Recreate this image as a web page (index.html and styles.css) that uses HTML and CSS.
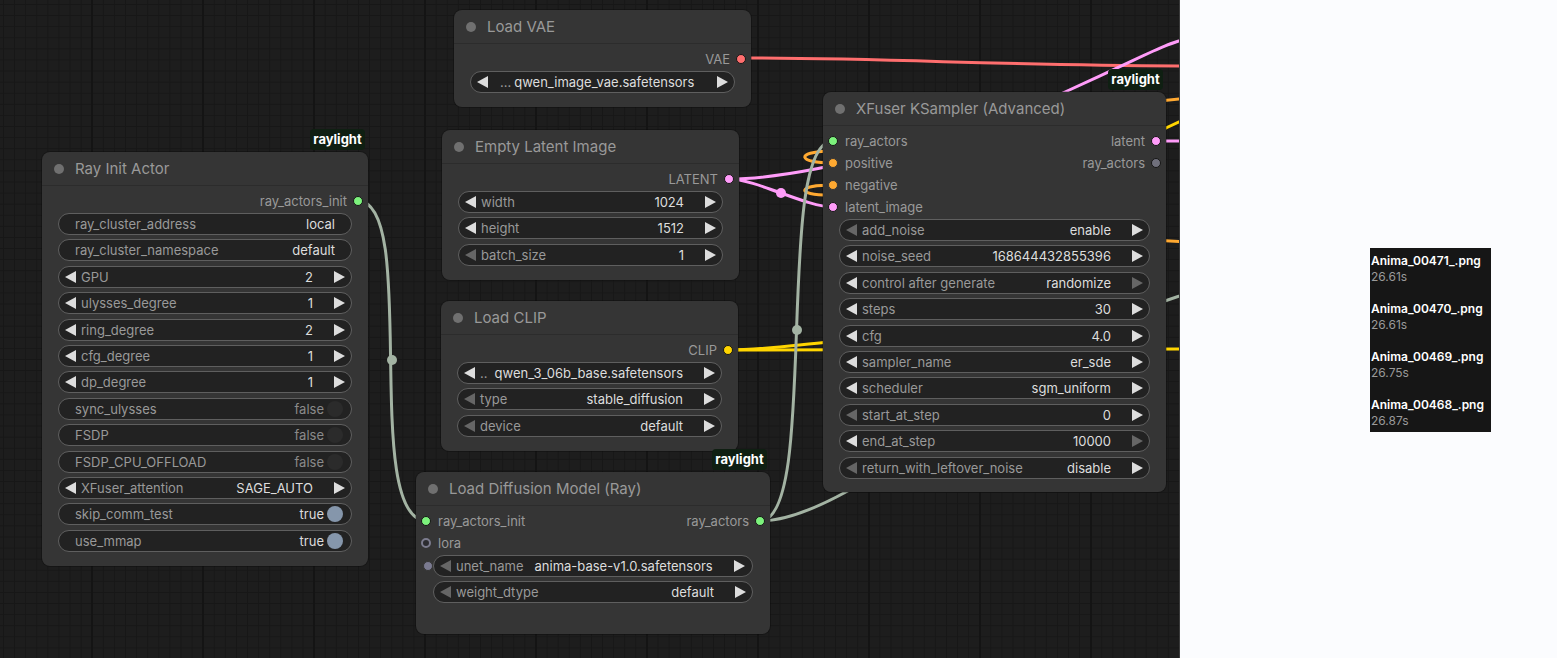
FILE: index.html
```html
<!DOCTYPE html>
<html lang="en">
<head>
    <meta charset="UTF-8">
    <meta name="viewport" content="width=device-width, initial-scale=1.0">
    <title>ComfyUI - Raylight</title>
    <link rel="stylesheet" href="styles.css">
</head>
<body>
<div class="app">

    <!-- Graph canvas -->
    <div class="canvas">

        <!-- Links -->
        <svg class="links" width="1179" height="658" viewBox="0 0 1179 658">
            <g fill="none" stroke-width="3" stroke-linecap="round">
                <path stroke="#ff6e6e" d="M741,58 C900,58 1000,66 1200,66"/>
                <path stroke="#ff9cf9" d="M729,179 C800,179 960,140 1065,92 S1150,50 1200,34"/>
                <path stroke="#ff9cf9" d="M729,179 C756,179 806,207 833,207"/>
                <path stroke="#ff9cf9" d="M1157,141 L1195,141"/>
                <path stroke="#ffa931" d="M833,163 C798,163 794,152 830,151 C950,150 1100,102 1195,98"/>
                <path stroke="#ffa931" d="M833,185 C798,185 794,195 830,195 C950,196 1100,242 1195,242"/>
                <path stroke="#ffd500" d="M727,350 C900,350 1000,349 1195,349"/>
                <path stroke="#ffd500" d="M727,350 C765,350 795,345 830,342 L1166,128 L1200,112"/>
                <path stroke="#a3b3a3" d="M358,201 C420,201 360,521 427,521"/>
                <path stroke="#a3b3a3" d="M760,521 C820,521 773,141 833,141"/>
                <path stroke="#a3b3a3" d="M760,521 C860,521 1040,330 1200,290"/>
            </g>
            <circle cx="392" cy="360" r="5" fill="#a3b3a3"/>
            <circle cx="797" cy="330" r="5" fill="#a3b3a3"/>
            <circle cx="781" cy="193" r="5" fill="#ff9cf9"/>
        </svg>

        <!-- Load VAE -->
        <div class="node node-vae">
            <div class="node-title"><span class="title-dot"></span>Load VAE</div>
            <div class="node-body">
                <div class="slot-row">
                    <span class="slot out">VAE<i class="dot red"></i></span>
                </div>
                <div class="widgets">
                    <div class="widget num">
                        <span class="arr left"></span>
                        <span class="w-label trunc-wide">…</span>
                        <span class="w-value file">qwen_image_vae.safetensors</span>
                        <span class="arr right"></span>
                    </div>
                </div>
            </div>
        </div>

        <!-- Empty Latent Image -->
        <div class="node node-latent">
            <div class="node-title"><span class="title-dot"></span>Empty Latent Image</div>
            <div class="node-body">
                <div class="slot-row">
                    <span class="slot out">LATENT<i class="dot pink"></i></span>
                </div>
                <div class="widgets">
                    <div class="widget num">
                        <span class="arr left"></span>
                        <span class="w-label">width</span>
                        <span class="w-value">1024</span>
                        <span class="arr right"></span>
                    </div>
                    <div class="widget num">
                        <span class="arr left"></span>
                        <span class="w-label">height</span>
                        <span class="w-value">1512</span>
                        <span class="arr right"></span>
                    </div>
                    <div class="widget num">
                        <span class="arr left off"></span>
                        <span class="w-label">batch_size</span>
                        <span class="w-value">1</span>
                        <span class="arr right"></span>
                    </div>
                </div>
            </div>
        </div>

        <!-- Load CLIP -->
        <div class="node node-clip">
            <div class="node-title"><span class="title-dot"></span>Load CLIP</div>
            <div class="node-body">
                <div class="slot-row">
                    <span class="slot out">CLIP<i class="dot yellow"></i></span>
                </div>
                <div class="widgets">
                    <div class="widget num">
                        <span class="arr left"></span>
                        <span class="w-label">..</span>
                        <span class="w-value file">qwen_3_06b_base.safetensors</span>
                        <span class="arr right"></span>
                    </div>
                    <div class="widget num">
                        <span class="arr left off"></span>
                        <span class="w-label">type</span>
                        <span class="w-value">stable_diffusion</span>
                        <span class="arr right"></span>
                    </div>
                    <div class="widget num">
                        <span class="arr left off"></span>
                        <span class="w-label">device</span>
                        <span class="w-value">default</span>
                        <span class="arr right"></span>
                    </div>
                </div>
            </div>
        </div>

        <!-- Ray Init Actor -->
        <div class="node node-ray-init">
            <div class="badge">raylight</div>
            <div class="node-title"><span class="title-dot"></span>Ray Init Actor</div>
            <div class="node-body">
                <div class="slot-row">
                    <span class="slot out">ray_actors_init<i class="dot green"></i></span>
                </div>
                <div class="widgets">
                    <div class="widget text">
                        <span class="w-label">ray_cluster_address</span>
                        <span class="w-value">local</span>
                    </div>
                    <div class="widget text">
                        <span class="w-label">ray_cluster_namespace</span>
                        <span class="w-value">default</span>
                    </div>
                    <div class="widget num">
                        <span class="arr left"></span>
                        <span class="w-label">GPU</span>
                        <span class="w-value">2</span>
                        <span class="arr right"></span>
                    </div>
                    <div class="widget num">
                        <span class="arr left"></span>
                        <span class="w-label">ulysses_degree</span>
                        <span class="w-value">1</span>
                        <span class="arr right"></span>
                    </div>
                    <div class="widget num">
                        <span class="arr left"></span>
                        <span class="w-label">ring_degree</span>
                        <span class="w-value">2</span>
                        <span class="arr right"></span>
                    </div>
                    <div class="widget num">
                        <span class="arr left"></span>
                        <span class="w-label">cfg_degree</span>
                        <span class="w-value">1</span>
                        <span class="arr right"></span>
                    </div>
                    <div class="widget num">
                        <span class="arr left"></span>
                        <span class="w-label">dp_degree</span>
                        <span class="w-value">1</span>
                        <span class="arr right"></span>
                    </div>
                    <div class="widget toggle">
                        <span class="w-label">sync_ulysses</span>
                        <span class="w-value muted">false</span>
                        <span class="knob"></span>
                    </div>
                    <div class="widget toggle">
                        <span class="w-label">FSDP</span>
                        <span class="w-value muted">false</span>
                        <span class="knob"></span>
                    </div>
                    <div class="widget toggle">
                        <span class="w-label">FSDP_CPU_OFFLOAD</span>
                        <span class="w-value muted">false</span>
                        <span class="knob"></span>
                    </div>
                    <div class="widget num">
                        <span class="arr left"></span>
                        <span class="w-label">XFuser_attention</span>
                        <span class="w-value">SAGE_AUTO</span>
                        <span class="arr right"></span>
                    </div>
                    <div class="widget toggle">
                        <span class="w-label">skip_comm_test</span>
                        <span class="w-value">true</span>
                        <span class="knob on"></span>
                    </div>
                    <div class="widget toggle">
                        <span class="w-label">use_mmap</span>
                        <span class="w-value">true</span>
                        <span class="knob on"></span>
                    </div>
                </div>
            </div>
        </div>

        <!-- Load Diffusion Model (Ray) -->
        <div class="node node-diffusion">
            <div class="badge">raylight</div>
            <div class="node-title"><span class="title-dot"></span>Load Diffusion Model (Ray)</div>
            <div class="node-body">
                <div class="slot-row">
                    <span class="slot in"><i class="dot green"></i>ray_actors_init</span>
                    <span class="slot out">ray_actors<i class="dot green"></i></span>
                </div>
                <div class="slot-row">
                    <span class="slot in"><i class="dot ring"></i>lora</span>
                </div>
                <div class="widgets">
                    <div class="widget num">
                        <i class="dot widget-in"></i>
                        <span class="arr left off"></span>
                        <span class="w-label fixed">unet_name</span>
                        <span class="w-value">anima-base-v1.0.safetensors</span>
                        <span class="arr right"></span>
                    </div>
                    <div class="widget num">
                        <span class="arr left off"></span>
                        <span class="w-label">weight_dtype</span>
                        <span class="w-value">default</span>
                        <span class="arr right"></span>
                    </div>
                </div>
            </div>
        </div>

        <!-- XFuser KSampler (Advanced) -->
        <div class="node node-ksampler">
            <div class="badge">raylight</div>
            <div class="node-title"><span class="title-dot"></span>XFuser KSampler (Advanced)</div>
            <div class="node-body">
                <div class="slot-row">
                    <span class="slot in"><i class="dot green"></i>ray_actors</span>
                    <span class="slot out">latent<i class="dot pink"></i></span>
                </div>
                <div class="slot-row">
                    <span class="slot in"><i class="dot orange"></i>positive</span>
                    <span class="slot out">ray_actors<i class="dot grey"></i></span>
                </div>
                <div class="slot-row">
                    <span class="slot in"><i class="dot orange"></i>negative</span>
                </div>
                <div class="slot-row">
                    <span class="slot in"><i class="dot pink"></i>latent_image</span>
                </div>
                <div class="widgets">
                    <div class="widget num">
                        <span class="arr left off"></span>
                        <span class="w-label">add_noise</span>
                        <span class="w-value">enable</span>
                        <span class="arr right"></span>
                    </div>
                    <div class="widget num">
                        <span class="arr left"></span>
                        <span class="w-label">noise_seed</span>
                        <span class="w-value">168644432855396</span>
                        <span class="arr right"></span>
                    </div>
                    <div class="widget num">
                        <span class="arr left"></span>
                        <span class="w-label">control after generate</span>
                        <span class="w-value">randomize</span>
                        <span class="arr right off"></span>
                    </div>
                    <div class="widget num">
                        <span class="arr left"></span>
                        <span class="w-label">steps</span>
                        <span class="w-value">30</span>
                        <span class="arr right"></span>
                    </div>
                    <div class="widget num">
                        <span class="arr left"></span>
                        <span class="w-label">cfg</span>
                        <span class="w-value">4.0</span>
                        <span class="arr right"></span>
                    </div>
                    <div class="widget num">
                        <span class="arr left"></span>
                        <span class="w-label">sampler_name</span>
                        <span class="w-value">er_sde</span>
                        <span class="arr right"></span>
                    </div>
                    <div class="widget num">
                        <span class="arr left"></span>
                        <span class="w-label">scheduler</span>
                        <span class="w-value">sgm_uniform</span>
                        <span class="arr right"></span>
                    </div>
                    <div class="widget num">
                        <span class="arr left off"></span>
                        <span class="w-label">start_at_step</span>
                        <span class="w-value">0</span>
                        <span class="arr right"></span>
                    </div>
                    <div class="widget num">
                        <span class="arr left"></span>
                        <span class="w-label">end_at_step</span>
                        <span class="w-value">10000</span>
                        <span class="arr right off"></span>
                    </div>
                    <div class="widget num">
                        <span class="arr left off"></span>
                        <span class="w-label">return_with_leftover_noise</span>
                        <span class="w-value">disable</span>
                        <span class="arr right"></span>
                    </div>
                </div>
            </div>
        </div>

    </div>

    <!-- Queue sidebar -->
    <div class="sidebar">
        <div class="queue">
            <div class="job">
                <div class="job-name">Anima_00471_.png</div>
                <div class="job-time">26.61s</div>
            </div>
            <div class="job">
                <div class="job-name">Anima_00470_.png</div>
                <div class="job-time">26.61s</div>
            </div>
            <div class="job">
                <div class="job-name">Anima_00469_.png</div>
                <div class="job-time">26.75s</div>
            </div>
            <div class="job">
                <div class="job-name">Anima_00468_.png</div>
                <div class="job-time">26.87s</div>
            </div>
        </div>
    </div>

</div>
</body>
</html>
```

FILE: styles.css
```css
/* Basic Reset */
* {
    margin: 0;
    padding: 0;
    box-sizing: border-box;
}

body {
    font-family: Inter, "Noto Sans", Arial, sans-serif;
    background-color: #1d1d1d;
    overflow: hidden;
}

.app {
    display: flex;
    width: 1557px;
    height: 658px;
}

/* Graph canvas */
.canvas {
    position: relative;
    width: 1179px;
    height: 658px;
    flex-shrink: 0;
    overflow: hidden;
    background-color: #1d1d1d;
    background-image:
        linear-gradient(to right, #141414 2px, transparent 2px),
        linear-gradient(to right, #171717 1px, transparent 1px),
        linear-gradient(to bottom, #171717 1px, transparent 1px);
    background-size: 111px 100%, 11.1px 100%, 100% 11.1px;
    background-position: 91px 0, 3px 0, 0 4px;
}

.links {
    position: absolute;
    top: 0;
    left: 0;
}

/* Nodes */
.node {
    position: absolute;
    background-color: #353535;
    border-radius: 8px;
    box-shadow: 0 0 0 1px rgba(0, 0, 0, 0.25);
}

.node-vae       { left: 454px; top: 10px;  width: 297px; height: 97px; }
.node-latent    { left: 442px; top: 130px; width: 297px; height: 150px; }
.node-clip      { left: 441px; top: 301px; width: 297px; height: 150px; }
.node-ray-init  { left: 42px;  top: 152px; width: 326px; height: 414px; }
.node-diffusion { left: 416px; top: 472px; width: 354px; height: 162px; }
.node-ksampler  { left: 823px; top: 92px;  width: 343px; height: 400px; }

.node-title {
    display: flex;
    align-items: center;
    gap: 11px;
    height: 34px;
    padding-left: 12px;
    border-bottom: 1px solid #2c2c2c;
    font-size: 15px;
    color: #999;
}

.title-dot {
    width: 10px;
    height: 10px;
    border-radius: 50%;
    background-color: #707070;
}

.node-body {
    padding-top: 4px;
}

/* Badge over the node */
.badge {
    position: absolute;
    right: 3px;
    bottom: calc(100% + 2px);
    width: 55px;
    height: 21px;
    line-height: 21px;
    text-align: center;
    font-size: 13px;
    font-weight: 700;
    color: #fff;
    background-color: #0f1f12;
    border-radius: 4px;
}

/* Slots */
.slot-row {
    display: flex;
    align-items: center;
    height: 22px;
    padding: 0 5px;
    font-size: 13px;
    color: #999;
}

.slot {
    display: flex;
    align-items: center;
    gap: 7px;
}

.slot.out {
    gap: 6px;
    margin-left: auto;
}

.dot {
    display: block;
    width: 10px;
    height: 10px;
    border-radius: 50%;
    border: 1px solid #161616;
    flex-shrink: 0;
}

.dot.green  { background-color: #7cf27c; }
.dot.pink   { background-color: #ff9cf9; }
.dot.red    { background-color: #ff6e6e; }
.dot.yellow { background-color: #ffd500; }
.dot.orange { background-color: #ffa931; border-color: #353535; }
.dot.grey   { background-color: #70707c; }

.dot.ring {
    background-color: #2c2c30;
    border: 2px solid #7c7c8e;
}

.dot.widget-in {
    position: absolute;
    left: -11px;
    top: 5px;
    background-color: #7a7a90;
    border-color: #353535;
}

/* Widgets */
.widgets {
    display: flex;
    flex-direction: column;
    gap: 4.4px;
    margin-top: 1px;
    padding: 0 16px;
}

.node-diffusion .widgets {
    padding: 0 17px;
}

.widget {
    position: relative;
    display: flex;
    align-items: center;
    height: 22px;
    border: 1px solid #5f5f5f;
    border-radius: 11px;
    background-color: #222;
    font-size: 13px;
    white-space: nowrap;
}

.widget.num {
    padding: 0 6px;
}

.widget.text {
    padding: 0 16px;
}

.widget.toggle {
    padding: 0 8px 0 16px;
}

.w-label {
    flex: 1;
    color: #999;
}

.widget.num .w-label {
    margin-left: 5px;
}

.widget.num .w-label.trunc-wide {
    margin-left: 12px;
    flex: 0 0 auto;
    margin-right: 3px;
}

.widget.num .w-label.fixed {
    flex: 0 0 auto;
    margin-right: 11px;
}

.w-value {
    color: #ddd;
}

.widget.num .w-value {
    margin-right: 21px;
}

.w-value.file {
    flex: 1;
}

.w-value.muted {
    color: #8a8a8a;
}

.arr {
    width: 0;
    height: 0;
    border-top: 6px solid transparent;
    border-bottom: 6px solid transparent;
    flex-shrink: 0;
}

.arr.left  { border-right: 11px solid #ddd; }
.arr.right { border-left: 11px solid #ddd; }
.arr.left.off  { border-right-color: #666; }
.arr.right.off { border-left-color: #666; }

.knob {
    width: 16px;
    height: 16px;
    margin-left: 3px;
    border-radius: 50%;
    background-color: #2b2b2b;
}

.knob.on {
    background-color: #8596ab;
}

/* Queue sidebar */
.sidebar {
    flex: 1;
    border-left: 1px solid #3a3a3a;
    background-color: #fbfcfe;
    padding: 248px 0 0 190px;
}

.queue {
    width: 121px;
    height: 184px;
    padding: 5px 0 0 1px;
    background-color: #161616;
}

.job {
    margin-bottom: 16px;
    font-size: 12px;
    line-height: 16px;
}

.job-name {
    font-weight: 600;
    color: #fff;
}

.job-time {
    color: #9a9a9a;
}
```
